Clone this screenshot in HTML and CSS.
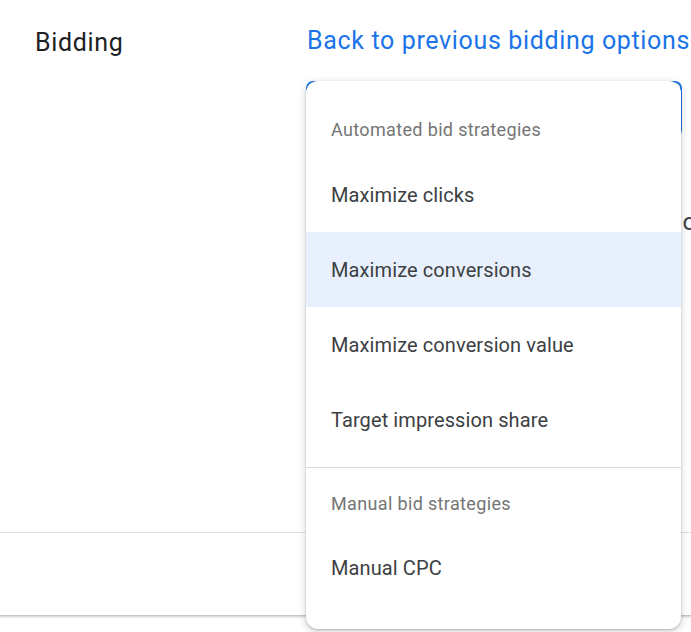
FILE: index.html
```html
<!DOCTYPE html>
<html lang="en">
<head>
<meta charset="utf-8">
<title>Bidding</title>
<link rel="stylesheet" href="styles.css">
</head>
<body>
<div class="card">
  <section class="section">
    <div class="label">Bidding</div>
    <div class="content">
      <a class="back-link" href="#">Back to previous bidding options</a>
      <div class="field-wrap">
        <div class="field"></div>
        <div class="menu" role="listbox">
          <div class="menu-header first">Automated bid strategies</div>
          <div class="menu-group">
            <div class="menu-item">Maximize clicks</div>
            <div class="menu-item active">Maximize conversions</div>
            <div class="menu-item">Maximize conversion value</div>
            <div class="menu-item">Target impression share</div>
          </div>
          <div class="menu-divider"></div>
          <div class="menu-header">Manual bid strategies</div>
          <div class="menu-item">Manual CPC</div>
        </div>
      </div>
      <p class="hint">Choose a bid strategy that focuses on</p>
    </div>
  </section>
  <div class="footer"></div>
</div>
</body>
</html>
```

FILE: styles.css
```css
html, body {
  margin: 0;
  padding: 0;
  background: #ffffff;
  overflow: hidden;
}

body {
  font-family: Roboto, "Liberation Sans", Arial, sans-serif;
  width: 691px;
  height: 632px;
}

.card {
  height: 615px;
  background: #ffffff;
  box-shadow: 0 1px 2px rgba(60, 64, 67, 0.3), 0 1px 3px 1px rgba(60, 64, 67, 0.15);
}

.section {
  display: flex;
  height: 532px;
  border-bottom: 1px solid #e0e0e0;
}

.label {
  width: 271px;
  flex: 0 0 271px;
  padding: 28px 0 0 35px;
  font-size: 25px;
  letter-spacing: 0.65px;
  line-height: 30px;
  color: #202124;
}

.content {
  flex: 1 1 auto;
  min-width: 0;
  padding-top: 26px;
  display: flex;
  flex-direction: column;
}

.back-link {
  display: block;
  font-size: 25px;
  letter-spacing: 0.65px;
  line-height: 30px;
  color: #1a73e8;
  text-decoration: none;
  white-space: nowrap;
  margin-left: 1px;
}

.field-wrap {
  position: relative;
  margin-top: 25px;
  width: 376px;
  height: 56px;
}

.field {
  box-sizing: border-box;
  height: 56px;
  border: 2px solid #1a73e8;
  border-radius: 7px;
}

.menu {
  position: absolute;
  top: 0;
  left: 0;
  width: 375px;
  box-sizing: border-box;
  padding-bottom: 24px;
  background: #ffffff;
  border-radius: 12px;
  box-shadow: 0 1px 2px rgba(60, 64, 67, 0.3), 0 2px 6px 2px rgba(60, 64, 67, 0.15);
  z-index: 2;
}

.menu-header {
  padding: 24px 25px 14px;
  font-size: 18px;
  letter-spacing: 0.35px;
  line-height: 24px;
  color: #757575;
}

.menu-header.first {
  padding-top: 37px;
  padding-bottom: 15px;
}

.menu-group {
  padding-bottom: 10px;
}

.menu-item {
  display: flex;
  align-items: center;
  height: 75px;
  padding: 0 25px;
  font-size: 20px;
  letter-spacing: 0.1px;
  line-height: 24px;
  color: #3c4043;
}

.menu-item.active {
  background: #e8f0fe;
}

.menu-divider {
  height: 1px;
  background: #dadce0;
}

.hint {
  margin: 70px -14px 0 0;
  font-size: 24px;
  line-height: 30px;
  color: #3c4043;
  text-align: right;
  white-space: nowrap;
}

.footer {
  height: 82px;
}
```
